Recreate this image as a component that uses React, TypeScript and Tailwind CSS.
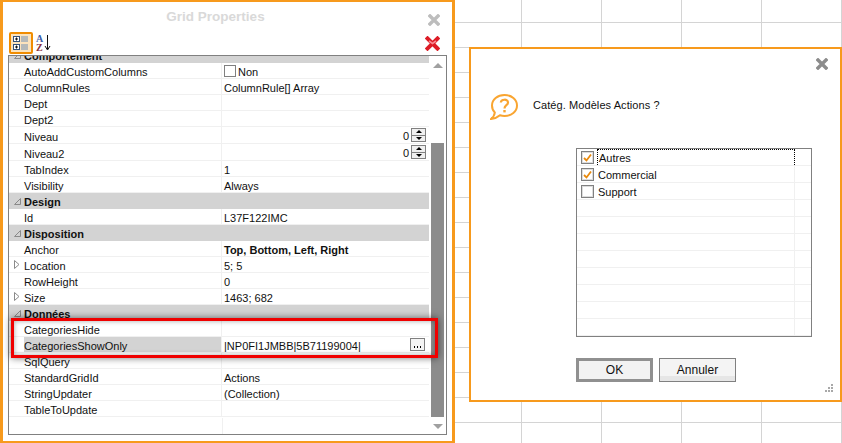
import React from 'react';

type Row = {
  label: string;
  value?: string;
  section?: boolean;
  bold?: boolean;
  expand?: boolean;
  spin?: boolean;
  check?: boolean;
  tall?: boolean;
  selected?: boolean;
};

const ROWS: Row[] = [
  { label: 'AutoAddCustomColumns', value: 'Non', check: true },
  { label: 'ColumnRules', value: 'ColumnRule[] Array' },
  { label: 'Dept' },
  { label: 'Dept2' },
  { label: 'Niveau', spin: true, tall: true },
  { label: 'Niveau2', spin: true, tall: true },
  { label: 'TabIndex', value: '1' },
  { label: 'Visibility', value: 'Always' },
  { label: 'Design', section: true },
  { label: 'Id', value: 'L37F122IMC' },
  { label: 'Disposition', section: true },
  { label: 'Anchor', value: 'Top, Bottom, Left, Right', bold: true },
  { label: 'Location', value: '5; 5', expand: true },
  { label: 'RowHeight', value: '0' },
  { label: 'Size', value: '1463; 682', expand: true },
  { label: 'Données', section: true },
  { label: 'CategoriesHide' },
  { label: 'CategoriesShowOnly', value: '|NP0FI1JMBB|5B71199004|', selected: true },
  { label: 'SqlQuery' },
  { label: 'StandardGridId', value: 'Actions' },
  { label: 'StringUpdater', value: '(Collection)' },
  { label: 'TableToUpdate' },
];

const CloseIcon = ({ color, size }: { color: string; size: number }) => (
  <svg width={size} height={size} viewBox="0 0 12 12" className="block">
    <path d="M2 2 L10 10 M10 2 L2 10" stroke={color} strokeWidth="3.4" strokeLinecap="square" fill="none" />
  </svg>
);

const DeleteIcon = () => (
  <svg width="15" height="15" viewBox="0 0 15 15" className="block">
    <path d="M2.5 2.5 L12.5 12.5 M12.5 2.5 L2.5 12.5" stroke="#dd1c26" strokeWidth="4" strokeLinecap="square" fill="none" />
    <path d="M4 5 L7.5 7.5 L11 5" stroke="#f98a92" strokeWidth="1.6" fill="none" />
  </svg>
);

const SectionArrow = () => (
  <svg width="7" height="7" viewBox="0 0 7 7" className="block">
    <path d="M6.5 0.5 V6.5 H0.5 Z" fill="none" stroke="#8a8a8a" />
  </svg>
);

const ExpandArrow = () => (
  <svg width="6" height="9" viewBox="0 0 6 9" className="block">
    <path d="M0.5 0.5 L5 4.5 L0.5 8.5 Z" fill="none" stroke="#8a8a8a" />
  </svg>
);

const Spinner = () => (
  <div className="flex h-[14px] w-[15px] flex-col border border-[#808080] bg-[#f0f0f0]">
    <div className="flex flex-1 items-center justify-center border-b border-[#808080]">
      <div className="h-0 w-0 border-x-[3px] border-b-[3px] border-x-transparent border-b-black" />
    </div>
    <div className="flex flex-1 items-center justify-center">
      <div className="h-0 w-0 border-x-[3px] border-t-[3px] border-x-transparent border-t-black" />
    </div>
  </div>
);

const GridRow = ({ row }: { row: Row }) => {
  if (row.section) {
    return (
      <div className="flex h-[16px] items-center bg-[#d3d3d3] font-bold">
        <div className="flex w-[15px] shrink-0 justify-center pl-[1px]">
          <SectionArrow />
        </div>
        <span className="block pt-[2px] leading-[15px]">{row.label}</span>
      </div>
    );
  }
  return (
    <div className={`flex ${row.tall ? 'h-[17px]' : 'h-[16px]'} border-b border-[#f0f0f0]`}>
      <div className="flex w-[15px] shrink-0 items-center justify-center">{row.expand && <ExpandArrow />}</div>
      <div className={`flex w-[198px] shrink-0 items-center border-r border-[#f0f0f0] ${row.selected ? 'bg-[#d3d3d3]' : ''}`}>
        <span className="block pt-[4px] leading-[15px]">{row.label}</span>
      </div>
      <div className={`flex min-w-0 flex-1 items-center pl-[2px] ${row.bold ? 'font-bold' : ''}`}>
        {row.check && <div className="mr-[2px] h-[12px] w-[12px] border border-[#808080] bg-white" />}
        <span className="block pt-[4px] leading-[15px]">{row.value}</span>
        {row.spin && (
          <div className="ml-auto mr-[3px] flex items-center gap-[2px]">
            <span className="block pt-[2px] leading-[15px]">0</span>
            <Spinner />
          </div>
        )}
        {row.selected && (
          <div className="ml-auto mr-[4px] flex h-[13px] w-[15px] items-end justify-center border border-[#808080] bg-[#f4f4f4] pb-[2px]">
            <div className="h-[2px] w-[9px] bg-[radial-gradient(circle,#000_1px,transparent_1px)] bg-[size:3px_2px]" />
          </div>
        )}
      </div>
    </div>
  );
};

const GridProperties = () => (
  <div className="absolute left-0 top-0 flex h-[443px] w-[455px] flex-col border-x-[3px] border-y-2 border-[#f79a1d] bg-white">
    <div className="flex h-[29px] shrink-0 items-center">
      <div className="flex-1 pt-[1px] text-center text-[13.5px] font-bold text-[#d9d9d9]">Grid Properties</div>
      <div className="mr-[12px] mt-[6px]">
        <CloseIcon color="#bdbdbd" size={12} />
      </div>
    </div>
    <div className="flex h-[24px] shrink-0 items-center pl-[6px]">
      <div className="flex h-[22px] w-[24px] items-center justify-center rounded-[2px] border-2 border-[#f08c00] bg-[#fbe3bd]">
        <svg width="16" height="16" viewBox="0 0 16 16" className="block">
          <rect x="0.5" y="1.5" width="6" height="5" fill="#ffffff" stroke="#33507a" />
          <rect x="0.5" y="9.5" width="6" height="5" fill="#ffffff" stroke="#33507a" />
          <path d="M2 4h3M3.5 2.5v3M2 12h3" stroke="#111" />
          <path d="M3.5 10.5v3" stroke="#111" />
          <path d="M8 2h7M8 4h7M8 6h7M8 10h7M8 12h7M8 14h7" stroke="#6f8fb5" />
        </svg>
      </div>
      <div className="ml-[3px] flex items-center">
        <div className="flex flex-col text-[10px] font-bold leading-[9px] [font-family:'Liberation_Serif',serif]">
          <span className="text-[#3b5ba5]">A</span>
          <span className="text-[#8b2f3a]">Z</span>
        </div>
        <svg width="7" height="16" viewBox="0 0 7 16" className="ml-[1px] block">
          <path d="M3.5 0 V14 M1 11 L3.5 15 L6 11" stroke="#111" fill="none" />
        </svg>
      </div>
      <div className="ml-auto mr-[12px]">
        <DeleteIcon />
      </div>
    </div>
    <div className="relative ml-[5px] flex h-[380px] w-[439px] shrink-0 border border-[#808080] text-[11px] text-[#111]">
      <div className="relative w-[420px] shrink-0 overflow-hidden">
        <div className="-mt-[9px]">
          <GridRow row={{ label: 'Comportement', section: true }} />
          {ROWS.map((row) => (
            <GridRow key={row.label} row={row} />
          ))}
        </div>
        <div className="absolute bottom-0 left-[213px] top-[362px] w-px bg-[#f0f0f0]" />
      </div>
      <div className="relative flex flex-1 flex-col items-center">
        <div className="mt-[7px] h-0 w-0 border-x-[5px] border-b-[5px] border-x-transparent border-b-[#a0a0a0]" />
        <div className="mt-[75px] h-[274px] w-[13px] bg-[#8c8c8c]" />
        <div className="mt-[7px] h-0 w-0 border-x-[5px] border-t-[5px] border-x-transparent border-t-[#a0a0a0]" />
      </div>
      <div className="absolute left-[2px] top-[262px] h-[40px] w-[427px] border-[3px] border-[#f00000] shadow-[0_0_7px_rgba(0,0,0,0.55),inset_0_0_5px_rgba(0,0,0,0.35)]" />
    </div>
  </div>
);

const CHECKS = [
  { label: 'Autres', checked: true, focus: true },
  { label: 'Commercial', checked: true },
  { label: 'Support', checked: false },
];

const CategoryDialog = () => (
  <div className="absolute left-[469px] top-[47px] flex h-[355px] w-[373px] flex-col border-2 border-[#f79a1d] bg-white text-[11px] text-[#111]">
    <div className="flex h-[21px] shrink-0 items-end justify-end pr-[12px]">
      <CloseIcon color="#8c8c8c" size={12} />
    </div>
    <div className="flex h-[78px] shrink-0 items-start pl-[19px] pt-[24px]">
      <svg width="28" height="26" viewBox="0 0 28 26" className="block">
        <path
          d="M14.5 1 C21.5 1 27 5.5 27 11.5 C27 17.5 21.5 22 14.5 22 C13 22 11.5 21.8 10 21.3 C7.5 23.5 4.5 24.6 1 25 C3.2 23.2 4.6 21 4.8 18.5 C2.9 16.6 2 14.2 2 11.5 C2 5.5 7.5 1 14.5 1 Z"
          fill="none"
          stroke="#f9a531"
          strokeWidth="2"
        />
        <path d="M10.8 8.5 C11 5 18 4.6 18 8.5 C18 11.5 14.5 11 14.5 14.5" fill="none" stroke="#f9a531" strokeWidth="2.2" />
        <rect x="13.3" y="16" width="2.4" height="2.4" fill="#f9a531" />
      </svg>
      <div className="ml-[15px] pt-[3px] tracking-[0.08px]">Catég. Modèles Actions ?</div>
    </div>
    <div className="ml-[105px] h-[189px] w-[236px] shrink-0 overflow-hidden border border-[#808080]">
      {CHECKS.map((item) => (
        <div key={item.label} className="flex h-[17px] border-b border-[#f0f0f0]">
          <div className="flex w-[20px] shrink-0 items-center justify-end pr-[3px] pt-[1px]">
            <div className="flex h-[13px] w-[13px] items-center justify-center border border-[#808080] bg-white">
              <div className="flex h-[11px] w-[11px] items-center justify-center border border-[#dcdcdc]">
                {item.checked && (
                  <svg width="9" height="9" viewBox="0 0 9 9" className="block">
                    <path d="M1 5 L3.5 7.5 L8 1.5" fill="none" stroke="#e8890c" strokeWidth="1.8" />
                  </svg>
                )}
              </div>
            </div>
          </div>
          <div
            className={`flex w-[198px] shrink-0 items-center border-r pl-[1px] ${item.focus ? 'border border-dotted border-black border-b-0' : 'border-[#f0f0f0]'}`}
          >
            <span className="block pt-[2px] leading-[15px]">{item.label}</span>
          </div>
        </div>
      ))}
      {Array.from({ length: 8 }, (_, i) => (
        <div key={i} className="flex h-[17px] border-b border-[#f0f0f0]">
          <div className="w-[218px] border-r border-[#f0f0f0]" />
        </div>
      ))}
    </div>
    <div className="ml-[105px] mt-[21px] flex gap-[6px]">
      <button className="flex h-[24px] w-[77px] items-center justify-center border-[3px] border-[#909090] bg-[#f2f2f2] text-[12px]">
        OK
      </button>
      <button className="flex h-[24px] w-[77px] items-center justify-center border border-[#808080] bg-[linear-gradient(#f4f4f4_75%,#e6e6e6_75%)] text-[12px]">
        Annuler
      </button>
    </div>
    <div className="absolute bottom-[8px] right-[7px]">
      <svg width="8" height="8" viewBox="0 0 8 8" className="block">
        <path d="M6 0h2v2H6zM3 3h2v2H3zM6 3h2v2H6zM0 6h2v2H0zM3 6h2v2H3zM6 6h2v2H6z" fill="#a8a8a8" />
      </svg>
    </div>
  </div>
);

export default function App() {
  return (
    <div className="relative h-[443px] w-[842px] overflow-hidden bg-white bg-[linear-gradient(#d4d4d4_1px,transparent_1px),linear-gradient(90deg,#d4d4d4_1px,transparent_1px)] bg-[size:80px_25px] bg-[position:41px_22px] [font-family:'Liberation_Sans',sans-serif]">
      <GridProperties />
      <CategoryDialog />
    </div>
  );
}
